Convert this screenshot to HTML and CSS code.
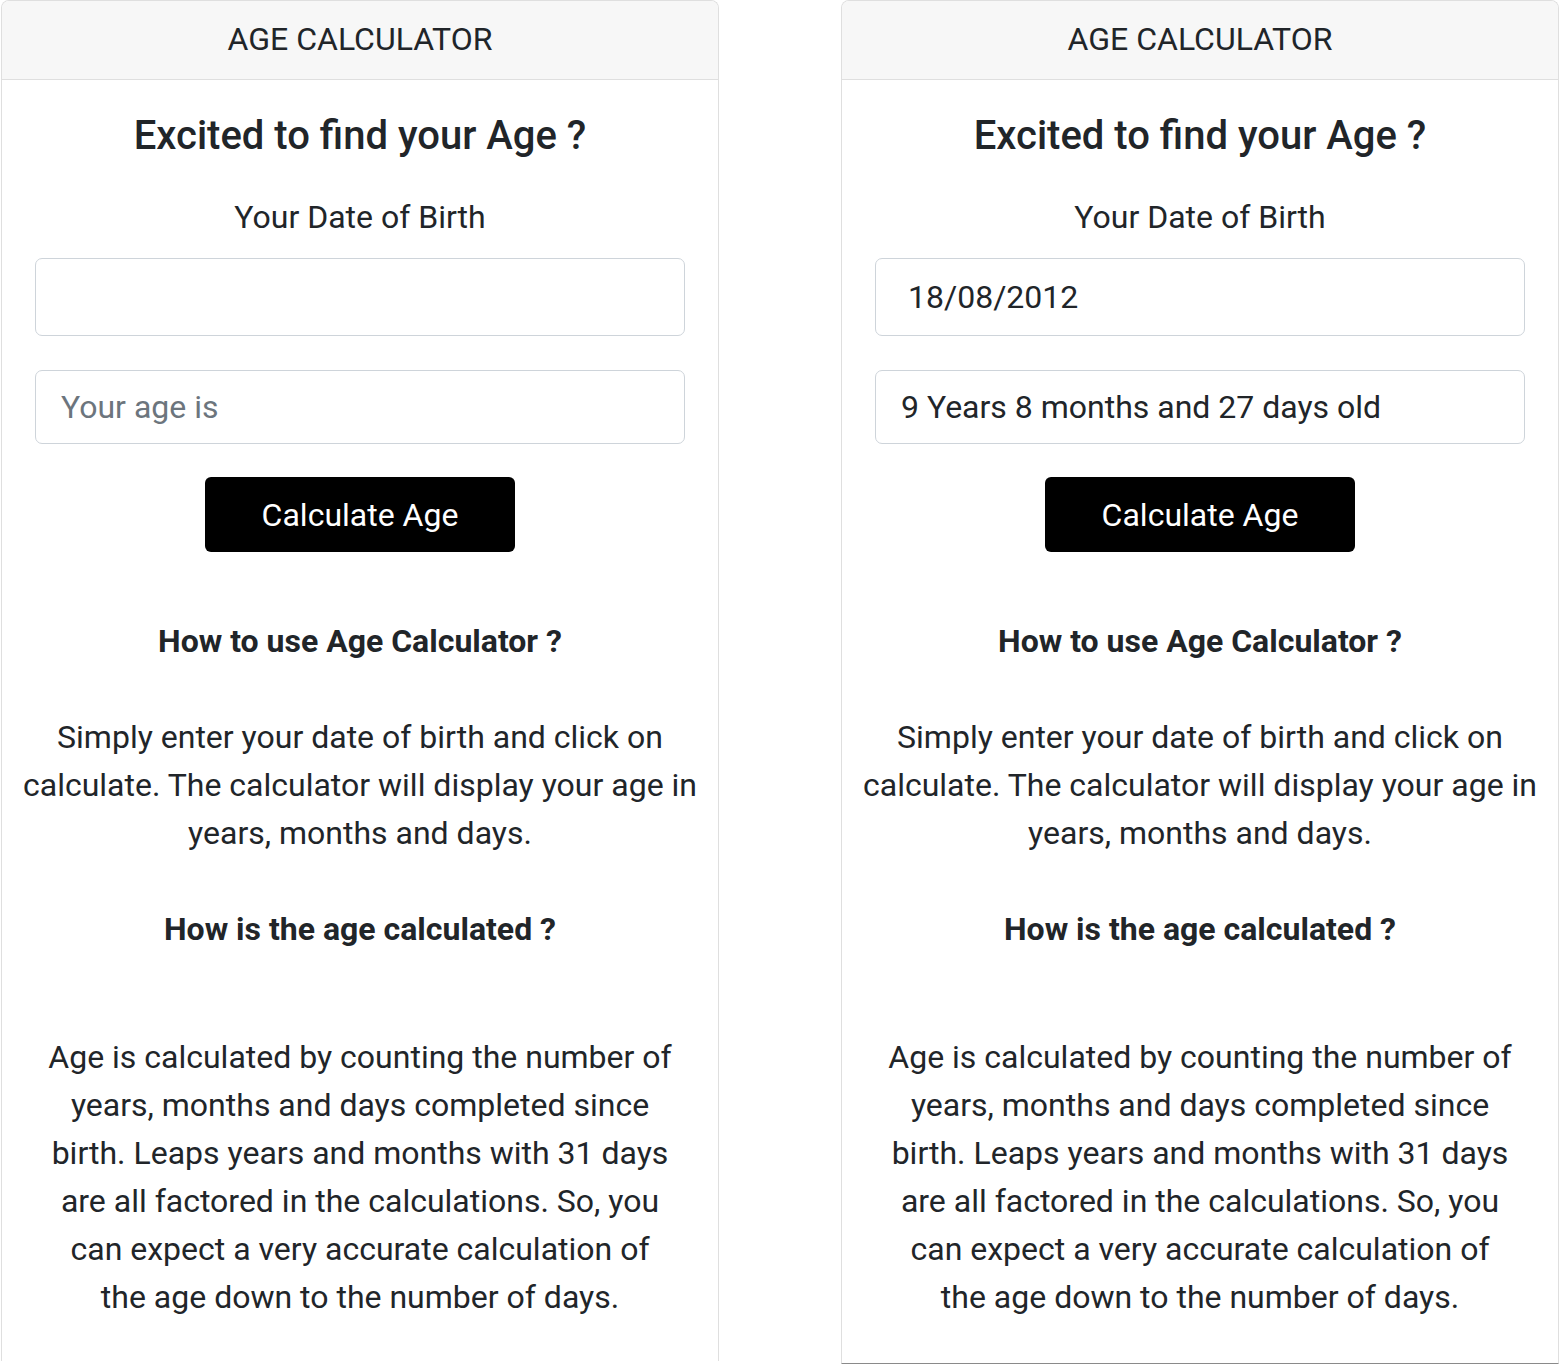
FILE: index.html
```html
<!DOCTYPE html>
<html>
<head>
	<meta charset="utf-8">
	<title>Age Calculator</title>
	<link rel="stylesheet" href="styles.css">
</head>
<body>
	<div class="page">
		<div class="card card-cut">
			<div class="card-header">AGE CALCULATOR</div>
			<div class="card-body">
				<h1 class="title">Excited to find your Age ?</h1>
				<label class="label">Your Date of Birth</label>
				<input class="field field-date" type="text" value="">
				<input class="field field-age" type="text" placeholder="Your age is">
				<button class="btn">Calculate Age</button>
				<h3 class="sub">How to use Age Calculator ?</h3>
				<p class="text text-wide">Simply enter your date of birth and click on calculate. The calculator will display your age in years, months and days.</p>
				<h3 class="sub">How is the age calculated ?</h3>
				<p class="text text-narrow">Age is calculated by counting the number of years, months and days completed since birth. Leaps years and months with 31 days are all factored in the calculations. So, you can expect a very accurate calculation of the age down to the number of days.</p>
			</div>
		</div>
		<div class="card card-end">
			<div class="card-header">AGE CALCULATOR</div>
			<div class="card-body">
				<h1 class="title">Excited to find your Age ?</h1>
				<label class="label">Your Date of Birth</label>
				<input class="field field-date" type="text" value="18/08/2012">
				<input class="field field-age" type="text" placeholder="Your age is" value="9 Years 8 months and 27 days old">
				<button class="btn">Calculate Age</button>
				<h3 class="sub">How to use Age Calculator ?</h3>
				<p class="text text-wide">Simply enter your date of birth and click on calculate. The calculator will display your age in years, months and days.</p>
				<h3 class="sub">How is the age calculated ?</h3>
				<p class="text text-narrow">Age is calculated by counting the number of years, months and days completed since birth. Leaps years and months with 31 days are all factored in the calculations. So, you can expect a very accurate calculation of the age down to the number of days.</p>
			</div>
		</div>
	</div>
</body>
</html>
```

FILE: styles.css
```css
*{margin: 0;padding: 0;box-sizing: border-box;}
body{background: #fff;font-family: Roboto, "Liberation Sans", sans-serif;color: #212529;}
.page{display: flex;gap: 122px;padding-left: 1px;}
.card{width: 718px;height: 1362px;border: 1px solid #dfdfdf;border-radius: 8px 8px 0 0;}
.card-cut{border-bottom: none;height: 1361px;}
.card-end{height: 1364px;border-bottom: 1px solid #8a8a8a;}
.card-header{height: 79px;background: #f7f7f7;border-bottom: 1px solid #dfdfdf;border-radius: 7px 7px 0 0;text-align: center;font-size: 32px;line-height: 77px;}
.card-body{display: flex;flex-direction: column;align-items: center;text-align: center;}
.title{margin-top: 32px;font-size: 40px;line-height: 48px;font-weight: 500;}
.label{margin-top: 35px;font-size: 32px;line-height: 44px;}
.field{display: block;width: 650px;margin-top: 19px;border: 1px solid #ced4da;border-radius: 7px;font-family: inherit;font-size: 32px;color: #212529;background: #fff;outline: none;}
.field-date{height: 78px;padding: 0 32px;}
.field-age{height: 74px;margin-top: 34px;padding: 0 25px;}
.field::placeholder{color: #6c757d;}
.btn{margin-top: 33px;width: 310px;height: 75px;background: #000;color: #fff;border: none;border-radius: 6px;font-family: inherit;font-size: 32px;}
.sub{margin-top: 69px;font-size: 32px;line-height: 40px;font-weight: 700;}
.sub + .text{margin-top: 52px;}
.text{font-size: 32px;line-height: 48px;}
.text-wide{padding: 0 8px;}
.text-narrow{padding: 0 45px;}
.text-wide + .sub{margin-top: 52px;}
.text-narrow{margin-top: 84px !important;}
```
